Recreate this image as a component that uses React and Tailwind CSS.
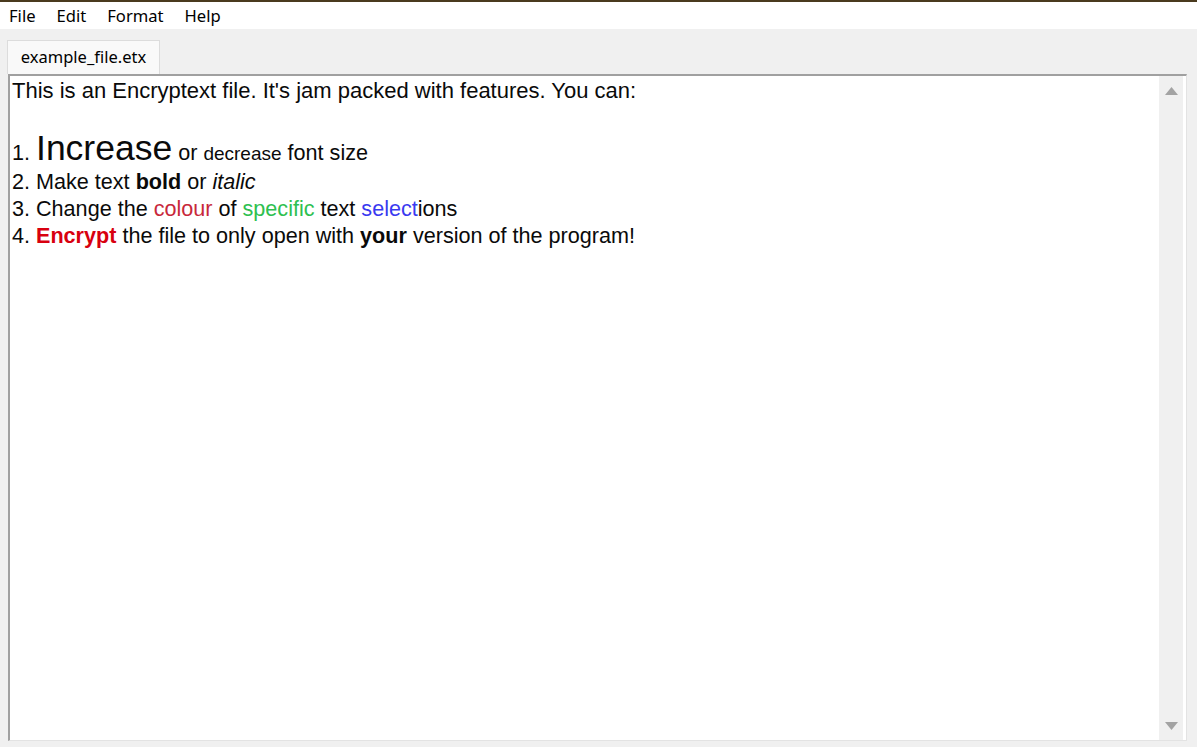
import React from "react";

export default function App() {
  return (
    <div className="w-[1197px] h-[747px] flex flex-col bg-[#f0f0f0] overflow-hidden">
      <div className="h-[2px] bg-[#4a3a1e]" />
      <div className="h-[27px] bg-white flex items-center pl-[9px] pt-[2px] gap-[21px] text-[16.6px] text-black font-['Noto_Sans',sans-serif]">
        <span>File</span>
        <span>Edit</span>
        <span>Format</span>
        <span>Help</span>
      </div>
      <div className="flex-1 flex flex-col pl-[7px] pr-[10px] pt-[11px] pb-[6px]">
        <div className="flex">
          <div className="h-[34px] w-[153px] bg-[#f9f9f9] border border-b-0 border-[#dcdcdc] flex items-center justify-center text-[16.5px] text-black font-['Noto_Sans',sans-serif]">
            example_file.etx
          </div>
        </div>
        <div className="flex-1 flex ml-[1px] border-t-2 border-l-2 border-[#a0a0a0] border-r border-b border-r-[#e3e3e3] border-b-[#e3e3e3] bg-white">
          <div className="flex-1 pl-[2px] pt-[1px] font-['Liberation_Sans',Arial,sans-serif] text-[21.6px] text-[#0a0a0a] leading-[27px]">
            <div className="text-[22px]">This is an Encryptext file. It's jam packed with features. You can:</div>
            <div className="h-[27px]" />
            <div className="leading-[30px]">
              1. <span className="text-[35.5px] leading-none">Increase</span> or{" "}
              <span className="text-[19px] leading-none">decrease</span> font size
            </div>
            <div>2. Make text <b>bold</b> or <i>italic</i></div>
            <div>
              3. Change the <span className="text-[#c8283a]">colour</span> of{" "}
              <span className="text-[#2ec050]">specific</span> text{" "}
              <span className="text-[#3a3af0]">select</span>ions
            </div>
            <div>
              4. <b className="text-[#d8000f]">Encrypt</b> the file to only open with <b>your</b> version of the program!
            </div>
          </div>
          <div className="w-[24px] mr-[3px] bg-[#f0f0f0] flex flex-col items-center justify-between pt-[11px] pb-[10px]">
            <svg width="13" height="8" viewBox="0 0 13 8"><path d="M6.5 0 L13 8 L0 8 Z" fill="#a3a3a3" /></svg>
            <svg width="13" height="8" viewBox="0 0 13 8"><path d="M0 0 L13 0 L6.5 8 Z" fill="#a3a3a3" /></svg>
          </div>
        </div>
      </div>
    </div>
  );
}
